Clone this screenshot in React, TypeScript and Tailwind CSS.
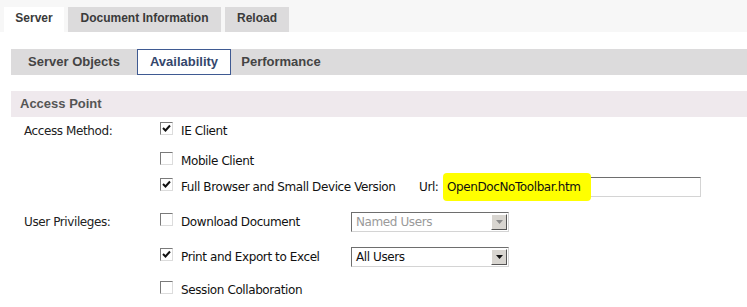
import React from 'react';

const font = { fontFamily: '"Liberation Sans", Arial, sans-serif' };
const body = { fontFamily: '"DejaVu Sans", Verdana, sans-serif' };

const Check: React.FC<{ checked?: boolean }> = ({ checked }) => (
  <span className="relative mb-[5px] flex h-[13px] w-[13px] shrink-0 items-center justify-center border-t-[#7a7a7a] border-l-[#7a7a7a] border-b-[#dcdcdc] border-r-[#dcdcdc] border bg-white">
    {checked && (
      <svg width="9" height="9" viewBox="0 0 9 9" className="block">
        <path d="M1 4 L3.5 6.5 L8 1.5" stroke="#111" strokeWidth="2" fill="none" />
      </svg>
    )}
  </span>
);

const Select: React.FC<{ value: string; disabled?: boolean }> = ({ value, disabled }) => (
  <div
    className={`flex h-[20px] w-[158px] items-stretch border border-t-[#6e6e6e] border-l-[#6e6e6e] border-b-[#d4d4d4] border-r-[#d4d4d4] bg-white ${
      disabled ? 'text-[#9a9a9a]' : 'text-[#111]'
    }`}
  >
    <span className="flex-1 pl-[4px] leading-[18px]">{value}</span>
    <span className="m-[1px] flex w-[16px] items-center justify-center border border-t-white border-l-white border-b-[#555] border-r-[#555] bg-[#d8d5d0]">
      <svg width="7" height="4" viewBox="0 0 7 4">
        <path d="M0 0 H7 L3.5 4 Z" fill={disabled ? '#8a8a8a' : '#111'} />
      </svg>
    </span>
  </div>
);

const Row: React.FC<{
  label?: string;
  className?: string;
  children: React.ReactNode;
}> = ({ label, className, children }) => (
  <div className={`flex h-[22px] items-center ${className ?? ''}`}>
    <span className="w-[160px] shrink-0 pl-[24px] text-[#222]">{label}</span>
    {children}
  </div>
);

export default function App() {
  return (
    <div className="h-[307px] w-[747px] overflow-hidden bg-white" style={font}>
      {/* top tabs */}
      <div className="flex h-[32px] items-end gap-[4px] bg-[#f7f7f7] pl-[4px]">
        <div className="h-[25px] w-[60px] bg-white pt-[2px] text-center text-[12px] font-bold leading-[18px] text-[#3a3a3a]">
          Server
        </div>
        <div className="h-[25px] w-[153px] bg-[#dcdbdc] pt-[2px] text-center text-[12px] font-bold leading-[18px] text-[#3a3a3a]">
          Document Information
        </div>
        <div className="h-[25px] w-[64px] bg-[#dcdbdc] pt-[2px] text-center text-[12px] font-bold leading-[18px] text-[#3a3a3a]">
          Reload
        </div>
      </div>

      {/* sub tabs */}
      <div className="ml-[11px] mt-[17px] flex h-[26px] items-stretch bg-[#dcdbdc] text-[13px] font-bold text-[#444]">
        <div className="flex w-[126px] items-center justify-center">Server Objects</div>
        <div className="flex w-[94px] items-center justify-center border border-[#3f5a92] bg-white text-[#34466b]">
          Availability
        </div>
        <div className="flex w-[100px] items-center justify-center">Performance</div>
      </div>

      {/* section header */}
      <div className="ml-[11px] mt-[16px] flex h-[26px] items-center bg-[#efe9ed] pl-[9px] text-[13px] font-bold text-[#555]">
        Access Point
      </div>

      <div className="pt-[3px] text-[12px] tracking-[-0.4px] text-[#111]" style={body}>
        <Row label="Access Method:">
          <Check checked />
          <span className="ml-[8px]">IE Client</span>
        </Row>
        <Row className="mt-[8px]">
          <Check />
          <span className="ml-[8px]">Mobile Client</span>
        </Row>
        <Row className="mt-[4px]">
          <Check checked />
          <span className="ml-[8px] w-[238px] shrink-0">Full Browser and Small Device Version</span>
          <span className="w-[24px] shrink-0">Url:</span>
          <div className="relative h-[20px] w-[258px] border border-t-[#6e6e6e] border-l-[#6e6e6e] border-b-[#d4d4d4] border-r-[#d4d4d4] bg-white">
            <span className="absolute left-[-1px] top-[-5px] h-[28px] w-[148px] rounded-[4px] bg-[#ffff00]" />
            <span className="relative pl-[3px] leading-[18px]">OpenDocNoToolbar.htm</span>
          </div>
        </Row>
        <Row label="User Privileges:" className="mt-[13px]">
          <Check />
          <span className="ml-[8px] w-[170px] shrink-0">Download Document</span>
          <Select value="Named Users" disabled />
        </Row>
        <Row className="mt-[13px]">
          <Check checked />
          <span className="ml-[8px] w-[170px] shrink-0">Print and Export to Excel</span>
          <Select value="All Users" />
        </Row>
        <Row className="mt-[11px]">
          <Check />
          <span className="ml-[8px]">Session Collaboration</span>
        </Row>
      </div>
    </div>
  );
}
